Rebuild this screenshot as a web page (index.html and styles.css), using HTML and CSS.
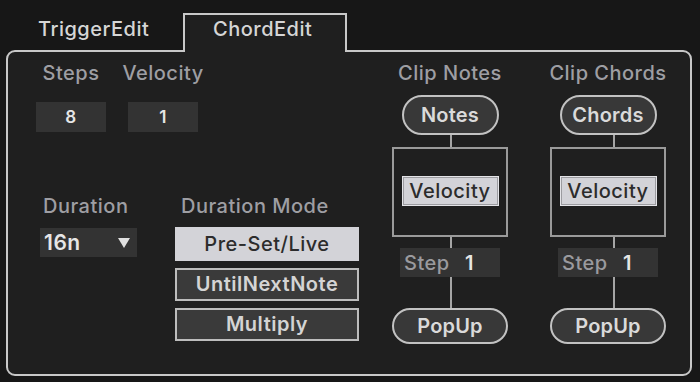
FILE: index.html
```html
<!DOCTYPE html>
<html>
<head>
<meta charset="utf-8">
<link rel="stylesheet" href="styles.css">
</head>
<body>
<div class="tabs">
  <div class="tab">TriggerEdit</div>
  <div class="tab active">ChordEdit</div>
</div>
<div class="panel">
  <div class="left">
    <div class="row1">
      <div class="field steps">
        <div class="label">Steps</div>
        <div class="num">8</div>
      </div>
      <div class="field vel">
        <div class="label">Velocity</div>
        <div class="num">1</div>
      </div>
    </div>
    <div class="row2">
      <div class="field dur">
        <div class="label">Duration</div>
        <div class="dropdown"><span>16n</span><span class="tri"></span></div>
      </div>
      <div class="field mode">
        <div class="label">Duration Mode</div>
        <div class="btn sel">Pre-Set/Live</div>
        <div class="btn">UntilNextNote</div>
        <div class="btn">Multiply</div>
      </div>
    </div>
  </div>
  <div class="col notes">
    <div class="label">Clip Notes</div>
    <div class="pill">Notes</div>
    <div class="wire w1"></div>
    <div class="frame"><div class="velbtn">Velocity</div></div>
    <div class="wire w2"></div>
    <div class="step"><span class="sl">Step</span><span class="sv">1</span></div>
    <div class="wire w3"></div>
    <div class="pill popup">PopUp</div>
  </div>
  <div class="col chords">
    <div class="label">Clip Chords</div>
    <div class="pill">Chords</div>
    <div class="wire w1"></div>
    <div class="frame"><div class="velbtn">Velocity</div></div>
    <div class="wire w2"></div>
    <div class="step"><span class="sl">Step</span><span class="sv">1</span></div>
    <div class="wire w3"></div>
    <div class="pill popup">PopUp</div>
  </div>
</div>
</body>
</html>
```

FILE: styles.css
```css
* { box-sizing: border-box; }
html, body { margin: 0; padding: 0; }
body {
  width: 700px;
  height: 382px;
  background: #171717;
  font-family: Inter, "Noto Sans", sans-serif;
  font-weight: 500;
  letter-spacing: 0.5px;
  overflow: hidden;
}
.tabs {
  display: flex;
  height: 50px;
  align-items: flex-start;
}
.tab {
  font-size: 20px;
  line-height: 22px;
  color: #d6d6d6;
  margin-top: 18px;
  padding-left: 38px;
  width: 183px;
}
.tab.active {
  position: relative;
  z-index: 1;
  margin-top: 13px;
  width: 164px;
  height: 39px;
  background: #1f1f1f;
  border: 2px solid #c8c8c8;
  border-bottom: none;
  padding: 3px 0 0 28px;
}
.panel {
  margin-left: 6px;
  width: 686px;
  height: 326px;
  border: 2px solid #c8c8c8;
  border-radius: 9px;
  background: #1f1f1f;
  display: flex;
  padding-top: 10px;
}
.label {
  font-size: 20px;
  line-height: 22px;
  color: #9e9ea3;
  white-space: nowrap;
}
.left {
  width: 377px;
  display: flex;
  flex-direction: column;
}
.row1 {
  display: flex;
  padding-left: 28px;
  gap: 22px;
}
.field {
  display: flex;
  flex-direction: column;
}
.steps, .vel { width: 70px; align-items: center; }
.num {
  margin-top: 18px;
  width: 70px;
  height: 30px;
  background: #333333;
  color: #e6e6e6;
  font-weight: 600;
  font-size: 17px;
  line-height: 30px;
  text-align: center;
}
.row2 {
  display: flex;
  margin-top: 63px;
  padding-left: 32px;
}
.dur .label { margin-left: 3px; }
.dropdown {
  margin-top: 11px;
  width: 97px;
  height: 29px;
  background: #333333;
  display: flex;
  align-items: center;
  justify-content: space-between;
  padding: 0 7px 0 4px;
  color: #e6e6e6;
  font-weight: 600;
  font-size: 21px;
}
.tri {
  width: 0;
  height: 0;
  border-left: 6.5px solid transparent;
  border-right: 6.5px solid transparent;
  border-top: 10px solid #e0e0e0;
}
.mode { margin-left: 38px; }
.mode .label { margin-left: 6px; margin-bottom: 10px; }
.btn {
  width: 184px;
  height: 33px;
  margin-bottom: 7px;
  border: 2px solid #bdbdbd;
  background: #3a3a3a;
  color: #d4d4d4;
  font-size: 20px;
  font-weight: 600;
  text-align: center;
  line-height: 29px;
}
.btn.sel {
  height: 34px;
  border: none;
  background: #d3d3d8;
  color: #2c2c2c;
  font-weight: 500;
  line-height: 34px;
}
.col {
  width: 130px;
  display: flex;
  flex-direction: column;
  align-items: center;
}
.chords { margin-left: 28px; }
.pill {
  margin-top: 11px;
  width: 97px;
  height: 40px;
  border: 2px solid #c2c2c2;
  border-radius: 20px;
  background: #383838;
  color: #dadada;
  font-size: 20px;
  font-weight: 600;
  letter-spacing: 0.2px;
  text-align: center;
  line-height: 36px;
}
.pill.popup {
  margin-top: 0;
  width: 116px;
  height: 36px;
  border-radius: 18px;
  line-height: 32px;
}
.wire {
  width: 2px;
  background: #a5a5a5;
  margin-left: 2px;
}
.chords .wire { margin-left: 11px; }
.w1 { height: 12px; }
.w2 { height: 11px; }
.w3 { height: 31px; }
.frame {
  width: 116px;
  height: 90px;
  border: 2px solid #9a9a9a;
  display: flex;
  align-items: center;
  justify-content: center;
}
.velbtn {
  width: 97px;
  height: 30px;
  background: #d3d3d8;
  border: 1px solid #e4e4e8;
  box-shadow: inset 0 0 0 1px #9c9ca0;
  color: #2c2c2c;
  font-size: 20px;
  text-align: center;
  line-height: 28px;
  margin-top: -2px;
}
.step {
  width: 100px;
  height: 29px;
  background: #333333;
  display: flex;
  align-items: center;
  padding-left: 4px;
  font-size: 20px;
}
.sl { color: #9a9a9e; width: 61px; }
.sv { color: #e6e6e6; font-weight: 600; }
```
